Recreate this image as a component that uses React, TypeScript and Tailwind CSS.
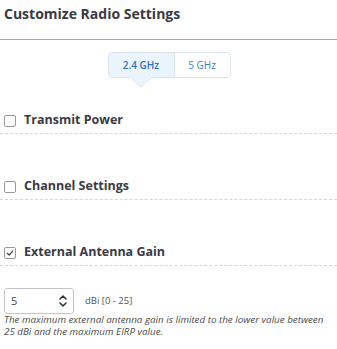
import { useState } from "react";

function Section({ label, checked }: { label: string; checked?: boolean }) {
  return (
    <div className="flex items-center gap-[8px] border-b border-dashed border-[#d6d6d6] h-[26px] pl-[4px]">
      <span className="w-[12px] h-[12px] rounded-[2px] border border-[#9a9a9a] flex items-center justify-center bg-white">
        {checked && (
          <svg width="8" height="8" viewBox="0 0 8 8" fill="none">
            <path d="M1.2 4.2 L3.2 6 L6.8 1.8" stroke="#444" strokeWidth="1.2" strokeLinecap="round" strokeLinejoin="round" />
          </svg>
        )}
      </span>
      <span className="text-[12.5px] font-bold text-[#3a3a44] leading-none">{label}</span>
    </div>
  );
}

export default function App() {
  const [tab, setTab] = useState("2.4");
  return (
    <div className="w-[337px] h-[349px] bg-white overflow-hidden" style={{ fontFamily: "'Open Sans', sans-serif" }}>
      <h1 className="text-[14px] font-bold text-[#3a3a44] pl-[4px] pt-[2px] leading-[24px]">Customize Radio Settings</h1>
      <div className="h-px bg-[#a8a8a8] mt-[13px]" />

      {/* tabs */}
      <div className="flex justify-center mt-[12px] pl-[1px]">
        <div className="flex border border-[#dde3ea] rounded-[4px] h-[26px] text-[10px]">
          <button
            onClick={() => setTab("2.4")}
            className={`relative w-[65px] rounded-l-[4px] font-semibold text-[#2f6fb8] ${tab === "2.4" ? "bg-[#eaf4fd]" : "bg-white"}`}
          >
            2.4 GHz
            {tab === "2.4" && (
              <span className="absolute left-1/2 -translate-x-1/2 top-full">
                <svg width="22" height="11" viewBox="0 0 22 11">
                  <path d="M0 0 L11 10 L22 0" fill="#eaf4fd" stroke="#dde3ea" strokeWidth="1" />
                  <path d="M0.5 -0.5 L21.5 -0.5" stroke="#eaf4fd" strokeWidth="2" />
                </svg>
              </span>
            )}
          </button>
          <button
            onClick={() => setTab("5")}
            className={`w-[56px] rounded-r-[4px] border-l border-[#dde3ea] text-[#3b7fcc] ${tab === "5" ? "bg-[#eaf4fd]" : "bg-white"}`}
          >
            5 GHz
          </button>
        </div>
      </div>

      <div className="mt-[30px]">
        <Section label="Transmit Power" />
      </div>
      <div className="mt-[40px]">
        <Section label="Channel Settings" />
      </div>
      <div className="mt-[40px]">
        <Section label="External Antenna Gain" checked />
      </div>

      <div className="flex items-center mt-[22px] pl-[4px]">
        <div className="w-[70px] h-[26px] border border-[#c4c4c4] rounded-[3px] flex items-center justify-between pl-[6px] pr-[5px]">
          <span className="text-[11px] text-[#444]">5</span>
          <svg width="10" height="16" viewBox="0 0 10 16" fill="none">
            <path d="M2 6 L5 3 L8 6" stroke="#333" strokeWidth="1.6" strokeLinecap="round" strokeLinejoin="round" />
            <path d="M2 10 L5 13 L8 10" stroke="#333" strokeWidth="1.6" strokeLinecap="round" strokeLinejoin="round" />
          </svg>
        </div>
        <span className="ml-[11px] text-[9.5px] text-[#555]">dBi [0 - 25]</span>
      </div>
      <p className="pl-[4px] pr-[4px] text-[9.8px] italic text-[#4a4a4a] leading-[12px] mt-0">
        The maximum external antenna gain is limited to the lower value between 25 dBi and the maximum EIRP value.
      </p>
    </div>
  );
}
